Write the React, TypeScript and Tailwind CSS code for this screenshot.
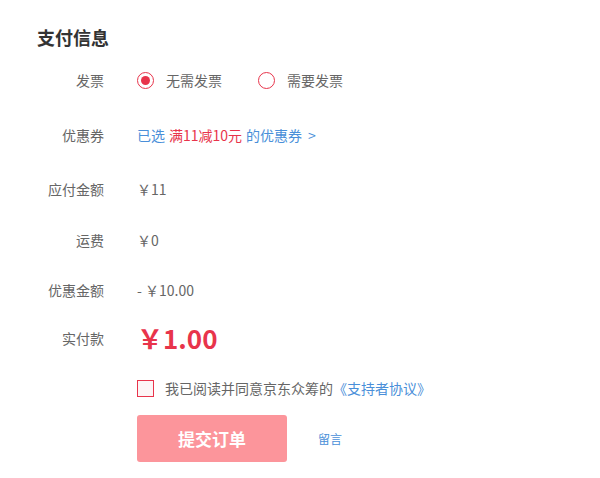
import React, { useState } from 'react'

const font = { fontFamily: '"Noto Sans CJK SC", "Microsoft YaHei", sans-serif' }

function Row({ label, children, className = '' }: { label: string; children: React.ReactNode; className?: string }) {
  return (
    <div className={`flex items-center h-[36px] ${className}`}>
      <div className="w-[67px] text-right text-[14px] text-[#666666]">{label}</div>
      <div className="ml-[33px] flex items-center text-[14px] text-[#666666]">{children}</div>
    </div>
  )
}

function Radio({ checked, label, onClick }: { checked: boolean; label: string; onClick: () => void }) {
  return (
    <button type="button" onClick={onClick} className="flex items-center cursor-pointer">
      <span className="w-[17px] h-[17px] rounded-full border border-[#e8344b] flex items-center justify-center">
        {checked && <span className="w-[9px] h-[9px] rounded-full bg-[#e8344b]" />}
      </span>
      <span className="ml-[12px] text-[14px] text-[#666666]">{label}</span>
    </button>
  )
}

export default function App() {
  const [invoice, setInvoice] = useState(0)
  const [agree, setAgree] = useState(false)

  return (
    <div className="w-[600px] h-[478px] bg-white pl-[37px] pt-[12px]" style={font}>
      <div className="h-[50px] flex items-center text-[18px] font-bold text-[#333333]">支付信息</div>

      <Row label="发票">
        <Radio checked={invoice === 0} label="无需发票" onClick={() => setInvoice(0)} />
        <div className="ml-[36px]">
          <Radio checked={invoice === 1} label="需要发票" onClick={() => setInvoice(1)} />
        </div>
      </Row>

      <Row label="优惠券" className="mt-[19px]">
        <span className="text-[#4a8fd9]">已选</span>
        <span className="ml-[4px] text-[#e8344b]">满11减10元</span>
        <span className="ml-[4px] text-[#4a8fd9]">的优惠券</span>
        <span className="ml-[6px] text-[#4a8fd9]">&gt;</span>
      </Row>

      <Row label="应付金额" className="mt-[18px]">￥11</Row>
      <Row label="运费" className="mt-[15px]">￥0</Row>
      <Row label="优惠金额" className="mt-[14px]">- ￥10.00</Row>

      <Row label="实付款" className="mt-[12px]">
        <span className="text-[26px] font-bold text-[#e8344b] leading-none">￥1.00</span>
      </Row>

      <div className="flex items-center h-[36px] mt-[14px] ml-[100px]">
        <button
          type="button"
          onClick={() => setAgree(!agree)}
          className="w-[17px] h-[17px] border border-[#e8344b] bg-[#fdf5f6] flex items-center justify-center"
        >
          {agree && <span className="text-[12px] text-[#e8344b] leading-none">✓</span>}
        </button>
        <span className="ml-[11px] text-[14px] text-[#666666]">我已阅读并同意京东众筹的</span>
        <span className="text-[14px] text-[#4a8fd9]">《支持者协议》</span>
      </div>

      <div className="flex items-center mt-[9px] ml-[100px]">
        <button
          type="button"
          className="w-[150px] h-[47px] rounded-[3px] bg-[#fc959b] text-white text-[17px] font-bold"
        >
          提交订单
        </button>
        <span className="ml-[31px] text-[12px] text-[#4a8fd9]">留言</span>
      </div>
    </div>
  )
}
